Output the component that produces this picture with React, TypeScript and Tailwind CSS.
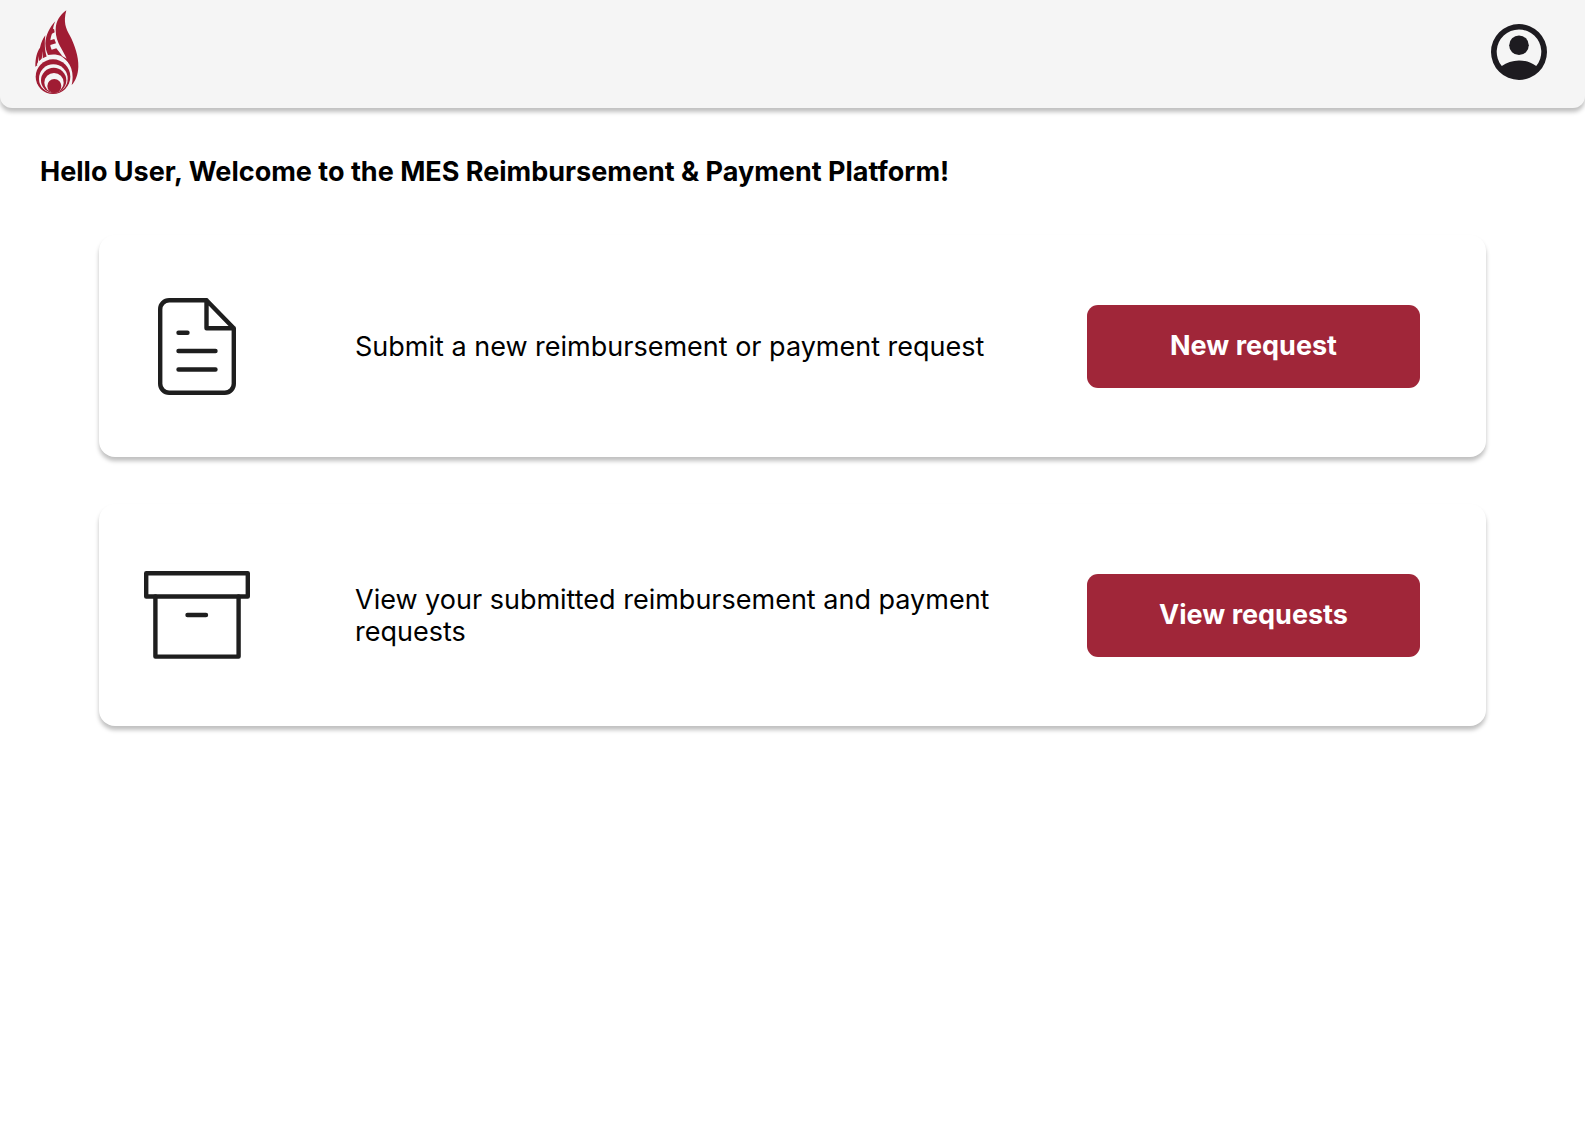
import type { ReactNode } from "react";

function FlameLogo() {
  return (
    <svg viewBox="45 28 132 252" className="h-[84px] w-11" role="img" aria-label="MES">
      <g fill="#a01c33">
        <path d="M139 29C120 43 107 62 107 88C107 108 113 124 121 138C127 149 134 160 140 174C132 168 126 165 117 162C136 173 149 188 154 204C159 220 159 238 155 253C167 240 174 222 175 198C176 168 164 132 149 104C138 84 129 64 139 29Z" />
        <path d="M106 62C89 80 77 104 76 128C76 142 79 153 84 163C97 160 112 161 127 166L109 143L95 147C93 142 91 138 91 133L108 128L103 115L91 119C92 111 94 104 96 99L104 95L102 84L99 86C100 78 102 70 106 62Z" />
        <path d="M76 104C68 114 63 128 60 141C51 153 46 172 46 198L52 194L57 166L57 188L64 180L69 152L68 176L80 168C74 150 73 128 76 104Z" />
        <circle cx="99" cy="228" r="52" />
      </g>
      <path d="M53 193C66 166 116 156 142 188" fill="none" stroke="#f5f5f5" strokeWidth="6" />
      <circle cx="100" cy="234" r="43" fill="#f5f5f5" />
      <circle cx="101" cy="239" r="38" fill="#a01c33" />
      <circle cx="102" cy="246" r="29" fill="#f5f5f5" />
      <circle cx="103" cy="256" r="21" fill="#a01c33" />
    </svg>
  );
}

function AccountIcon() {
  return (
    <svg viewBox="0 0 56 56" className="size-14" aria-hidden="true">
      <path
        fill="#1d1b20"
        fillRule="evenodd"
        d="M28 0a28 28 0 1 1 0 56a28 28 0 0 1 0-56ZM10.800 42C15.500 38.600 21.500 36.400 28 36.400S40.500 38.600 45.200 42A22.300 22.300 0 1 0 10.800 42Z"
      />
      <circle cx="28" cy="21.200" r="9.800" fill="#1d1b20" />
    </svg>
  );
}

function DocumentIcon() {
  return (
    <svg viewBox="0 0 78 97" className="h-[97px] w-[78px]" fill="none" stroke="#1e1e1e" strokeWidth="4.400" strokeLinecap="round" strokeLinejoin="round" aria-hidden="true">
      <path d="M48.500 2.200H11.200a9 9 0 0 0-9 9v74.600a9 9 0 0 0 9 9h55.600a9 9 0 0 0 9-9V30.200L48.500 2.200V30.200H75.800" />
      <path d="M20.500 34.800h9M20.500 53h37M20.500 71.500h37" />
    </svg>
  );
}

function ArchiveIcon() {
  return (
    <svg viewBox="0 0 106 88" className="h-[88px] w-[106px]" fill="none" stroke="#1e1e1e" strokeWidth="4.400" strokeLinecap="round" strokeLinejoin="round" aria-hidden="true">
      <path d="M2.200 2.200H103.800V25.500H2.200Z" />
      <path d="M11.400 25.500V85.600H94.600V25.500M43.500 44h18.500" />
    </svg>
  );
}

function ActionCard({ icon, text, action }: { icon: ReactNode; text: string; action: string }) {
  return (
    <section className="flex min-h-[222px] items-center rounded-2xl bg-white pr-[66px] pl-[44px] shadow-[0_4px_4px_rgba(0,0,0,0.25)]">
      <div className="flex w-[108px] shrink-0 justify-center">{icon}</div>
      <p className="ml-[104px] flex-1 pt-0.5 text-[27px] leading-8">{text}</p>
      <button type="button" className="ml-20 h-[83px] w-[333px] shrink-0 cursor-pointer rounded-[11px] bg-[#a02639] text-[27px] leading-8 font-bold text-white">
        {action}
      </button>
    </section>
  );
}

export default function App() {
  return (
    <div className="min-h-screen bg-white font-['Inter',sans-serif] text-black">
      <header className="flex h-[108px] items-center justify-between rounded-b-xl bg-[#f5f5f5] pr-[38px] pb-1 pl-[35px] shadow-[0_4px_4px_rgba(0,0,0,0.25)]">
        <a href="#" aria-label="Home">
          <FlameLogo />
        </a>
        <button type="button" aria-label="Account" className="cursor-pointer rounded-full">
          <AccountIcon />
        </button>
      </header>
      <main>
        <h1 className="mt-12 px-10 text-[27px] leading-8 font-bold">
          Hello User, Welcome to the MES Reimbursement &amp; Payment Platform!
        </h1>
        <div className="mx-[99px] mt-[47px] flex flex-col gap-[47px]">
          <ActionCard icon={<DocumentIcon />} text="Submit a new reimbursement or payment request" action="New request" />
          <ActionCard icon={<ArchiveIcon />} text="View your submitted reimbursement and payment requests" action="View requests" />
        </div>
      </main>
    </div>
  );
}
